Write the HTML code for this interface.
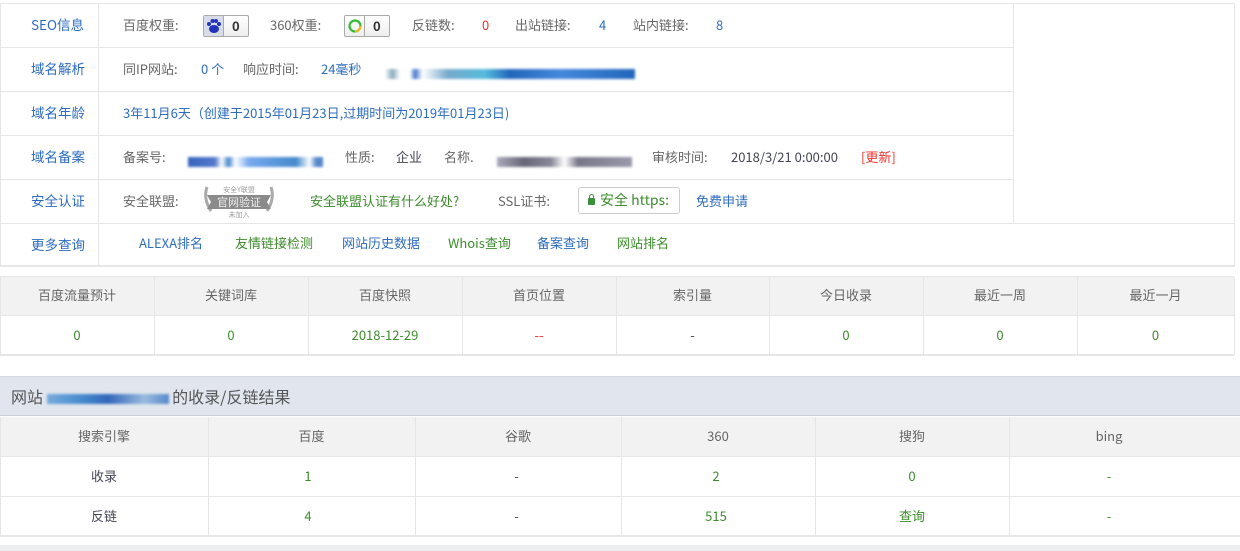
<!DOCTYPE html>
<html><head><meta charset="utf-8"><style>
*{margin:0;padding:0;box-sizing:border-box}
body{width:1240px;height:551px;background:#fff;font-family:"Noto Sans CJK SC","Liberation Sans",sans-serif;font-size:13px;line-height:18px;color:#666;position:relative;overflow:hidden}
.a{position:absolute;white-space:nowrap}
.hl{position:absolute;height:1px;background:#e6e6e6}
.vl{position:absolute;width:1px;background:#e6e6e6}
.b{color:#2d6cc0}.g{color:#3c8c2c}.r{color:#f0302a}.d{color:#445}
.lab{color:#2d6cc0;font-size:13.5px}
.blur{display:inline-block;height:10px;filter:blur(1.3px);vertical-align:middle}
.badge{position:absolute;height:22px;border:1px solid #aaa;border-radius:2px;background:linear-gradient(#fff,#eee);}
.cell{position:absolute;text-align:center}
</style></head><body>
<div class="hl" style="left:0;top:3px;width:1235px"></div>
<div class="hl" style="left:0;top:47px;width:1013px"></div>
<div class="hl" style="left:0;top:91px;width:1013px"></div>
<div class="hl" style="left:0;top:135px;width:1013px"></div>
<div class="hl" style="left:0;top:179px;width:1013px"></div>
<div class="hl" style="left:0;top:223px;width:1235px"></div>
<div class="hl" style="left:0;top:265px;width:1235px;height:2px"></div>
<div class="vl" style="left:0;top:3px;height:263px"></div>
<div class="vl" style="left:98px;top:3px;height:263px"></div>
<div class="vl" style="left:1013px;top:3px;height:220px"></div>
<div class="vl" style="left:1234px;top:3px;height:263px"></div>

<div class="a lab" style="left:31px;top:15px">SEO信息</div>
<div class="a lab" style="left:31px;top:59px">域名解析</div>
<div class="a lab" style="left:31px;top:103px">域名年龄</div>
<div class="a lab" style="left:31px;top:147px">域名备案</div>
<div class="a lab" style="left:31px;top:191px">安全认证</div>
<div class="a lab" style="left:31px;top:235px">更多查询</div>

<div class="a" style="left:123px;top:16px">百度权重:</div>
<div class="badge" style="left:203px;top:15px;width:46px"><div style="position:absolute;left:0;top:0;width:20px;height:20px;background:#d8dce8;border-right:1px solid #aaa"><svg width="20" height="20" viewBox="0 0 20 20"><ellipse cx="10" cy="13" rx="5" ry="4" fill="#2233bb"/><circle cx="5" cy="8" r="2" fill="#2233bb"/><circle cx="8.5" cy="5" r="2" fill="#2233bb"/><circle cx="12" cy="5" r="2" fill="#2233bb"/><circle cx="15" cy="8" r="2" fill="#2233bb"/></svg></div><b class="a" style="left:28px;top:1px;color:#333">0</b></div>
<div class="a" style="left:270px;top:16px">360权重:</div>
<div class="badge" style="left:344px;top:15px;width:46px"><div style="position:absolute;left:0;top:0;width:20px;height:20px;border-right:1px solid #aaa"><svg width="20" height="20"><circle cx="10" cy="10" r="5.5" fill="none" stroke="#3b3" stroke-width="2.2"/><path d="M10 15.5 A5.5 5.5 0 0 0 15.5 10" stroke="#eb2" stroke-width="2.2" fill="none"/></svg></div><b class="a" style="left:28px;top:1px;color:#333">0</b></div>
<div class="a" style="left:412px;top:16px">反链数:</div>
<div class="a r" style="left:482px;top:16px">0</div>
<div class="a" style="left:515px;top:16px">出站链接:</div>
<div class="a b" style="left:599px;top:16px">4</div>
<div class="a" style="left:633px;top:16px">站内链接:</div>
<div class="a b" style="left:716px;top:16px">8</div>

<div class="a" style="left:123px;top:60px">同IP网站:</div>
<div class="a b" style="left:201px;top:60px">0 个</div>
<div class="a" style="left:243px;top:60px">响应时间:</div>
<div class="a b" style="left:321px;top:60px">24毫秒</div>
<div class="a" style="left:385px;top:64px"><span class="blur" style="width:250px;background:linear-gradient(90deg,#fff 0,#8ab 3%,#fff 6%,#fff 10%,#47c 12%,#fff 15%,#7ac 25%,#5bd 40%,#26b 50%,#48d 70%,#26b 100%)"></span></div>

<div class="a b" style="left:123px;top:104px">3年11月6天（创建于2015年01月23日,过期时间为2019年01月23日)</div>

<div class="a" style="left:123px;top:148px">备案号:</div>
<div class="a" style="left:188px;top:152px"><span class="blur" style="width:135px;background:linear-gradient(90deg,#36b 0,#57c 20%,#fff 25%,#48c 30%,#fff 35%,#7ae 45%,#48c 80%,#fff 90%,#58c 95%)"></span></div>
<div class="a" style="left:345px;top:148px">性质:</div>
<div class="a d" style="left:396px;top:148px">企业</div>
<div class="a" style="left:444px;top:148px">名称.</div>
<div class="a" style="left:497px;top:152px"><span class="blur" style="width:135px;background:linear-gradient(90deg,#aab 0,#667 20%,#889 40%,#fff 50%,#778 60%,#99a 100%)"></span></div>
<div class="a" style="left:652px;top:148px">审核时间:</div>
<div class="a d" style="left:731px;top:148px">2018/3/21 0:00:00</div>
<div class="a r" style="left:861px;top:148px">[更新]</div>

<div class="a" style="left:123px;top:192px">安全联盟:</div>
<div class="a" style="left:201px;top:181px;width:76px;height:38px"><svg width="76" height="38"><path d="M6 6 Q2 18 10 30" stroke="#aaa" stroke-width="3" fill="none"/><path d="M70 6 Q74 18 66 30" stroke="#aaa" stroke-width="3" fill="none"/><path d="M6 14 H70 L66 21 L70 28 H6 L10 21 Z" fill="#8a8a8a"/><text x="38" y="25" font-size="11" fill="#eee" text-anchor="middle" font-family="Noto Sans CJK SC">官网验证</text><text x="38" y="11" font-size="7" fill="#999" text-anchor="middle" font-family="Noto Sans CJK SC">安全Y联盟</text><text x="38" y="36" font-size="7" fill="#999" text-anchor="middle" font-family="Noto Sans CJK SC">未加入</text></svg></div>
<div class="a g" style="left:310px;top:192px">安全联盟认证有什么好处?</div>
<div class="a" style="left:498px;top:192px">SSL证书:</div>
<div class="a" style="left:578px;top:187px;width:102px;height:27px;border:1px solid #ccc;border-radius:3px"><span class="a" style="left:9px;top:10px;width:7px;height:7px;background:#3a8f3a;border-radius:1px"></span><span class="a" style="left:10px;top:6px;width:5px;height:5px;border:1.5px solid #3a8f3a;border-bottom:none;border-radius:3px 3px 0 0"></span><span class="a g" style="left:21px;top:3px;font-size:14px">安全 https:</span></div>
<div class="a b" style="left:696px;top:192px">免费申请</div>

<div class="a b" style="left:139px;top:234px">ALEXA排名</div>
<div class="a g" style="left:235px;top:234px">友情链接检测</div>
<div class="a b" style="left:342px;top:234px">网站历史数据</div>
<div class="a g" style="left:448px;top:234px">Whois查询</div>
<div class="a b" style="left:537px;top:234px">备案查询</div>
<div class="a g" style="left:617px;top:234px">网站排名</div>

<div class="a" style="left:0;top:277px;width:1234px;height:38px;background:#f2f2f2"></div>
<div class="hl" style="left:0;top:276px;width:1234px"></div>
<div class="hl" style="left:0;top:315px;width:1234px"></div>
<div class="hl" style="left:0;top:354px;width:1234px;height:2px"></div>
<div class="vl" style="left:0;top:277px;height:78px"></div>
<div class="vl" style="left:154px;top:277px;height:78px"></div>
<div class="vl" style="left:308px;top:277px;height:78px"></div>
<div class="vl" style="left:462px;top:277px;height:78px"></div>
<div class="vl" style="left:616px;top:277px;height:78px"></div>
<div class="vl" style="left:769px;top:277px;height:78px"></div>
<div class="vl" style="left:923px;top:277px;height:78px"></div>
<div class="vl" style="left:1077px;top:277px;height:78px"></div>
<div class="vl" style="left:1234px;top:277px;height:78px"></div>
<div class="cell" style="left:0;top:286px;width:154px">百度流量预计</div>
<div class="cell" style="left:154px;top:286px;width:154px">关键词库</div>
<div class="cell" style="left:308px;top:286px;width:154px">百度快照</div>
<div class="cell" style="left:462px;top:286px;width:154px">首页位置</div>
<div class="cell" style="left:616px;top:286px;width:153px">索引量</div>
<div class="cell" style="left:769px;top:286px;width:154px">今日收录</div>
<div class="cell" style="left:923px;top:286px;width:154px">最近一周</div>
<div class="cell" style="left:1077px;top:286px;width:157px">最近一月</div>
<div class="cell g" style="left:0;top:326px;width:154px">0</div>
<div class="cell g" style="left:154px;top:326px;width:154px">0</div>
<div class="cell g" style="left:308px;top:326px;width:154px">2018-12-29</div>
<div class="cell r" style="left:462px;top:326px;width:154px">--</div>
<div class="cell d" style="left:616px;top:326px;width:153px">-</div>
<div class="cell g" style="left:769px;top:326px;width:154px">0</div>
<div class="cell g" style="left:923px;top:326px;width:154px">0</div>
<div class="cell g" style="left:1077px;top:326px;width:157px">0</div>

<div class="a" style="left:0;top:376px;width:1240px;height:40px;background:#e1e6ee;border-top:1px solid #d6dbe3;border-bottom:1px solid #c8d0dc"></div>
<div class="a" style="left:11px;top:386px;font-size:16px;line-height:20px;color:#555">网站 <span class="blur" style="width:122px;background:linear-gradient(90deg,#7ad,#48c 30%,#36b 50%,#9bd 80%,#58c)"></span> 的收录/反链结果</div>
<div class="a" style="left:0;top:417px;width:1240px;height:39px;background:#f2f2f2"></div>
<div class="hl" style="left:0;top:456px;width:1240px"></div>
<div class="hl" style="left:0;top:496px;width:1240px"></div>
<div class="hl" style="left:0;top:535px;width:1240px;height:2px"></div>
<div class="vl" style="left:0;top:417px;height:119px"></div>
<div class="vl" style="left:208px;top:417px;height:119px"></div>
<div class="vl" style="left:415px;top:417px;height:119px"></div>
<div class="vl" style="left:621px;top:417px;height:119px"></div>
<div class="vl" style="left:815px;top:417px;height:119px"></div>
<div class="vl" style="left:1009px;top:417px;height:119px"></div>
<div class="cell" style="left:0;top:427px;width:208px">搜索引擎</div>
<div class="cell" style="left:208px;top:427px;width:207px">百度</div>
<div class="cell" style="left:415px;top:427px;width:206px">谷歌</div>
<div class="cell" style="left:621px;top:427px;width:194px">360</div>
<div class="cell" style="left:815px;top:427px;width:194px">搜狗</div>
<div class="cell" style="left:1009px;top:427px;width:200px">bing</div>
<div class="cell d" style="left:0;top:467px;width:208px">收录</div>
<div class="cell g" style="left:208px;top:467px;width:200px">1</div>
<div class="cell d" style="left:415px;top:467px;width:203px">-</div>
<div class="cell g" style="left:621px;top:467px;width:190px">2</div>
<div class="cell g" style="left:815px;top:467px;width:194px">0</div>
<div class="cell g" style="left:1009px;top:467px;width:200px">-</div>
<div class="cell d" style="left:0;top:507px;width:208px">反链</div>
<div class="cell g" style="left:208px;top:507px;width:200px">4</div>
<div class="cell d" style="left:415px;top:507px;width:203px">-</div>
<div class="cell g" style="left:621px;top:507px;width:190px">515</div>
<div class="cell g" style="left:815px;top:507px;width:194px">查询</div>
<div class="cell g" style="left:1009px;top:507px;width:200px">-</div>
<div class="a" style="left:0;top:545px;width:1240px;height:6px;background:#eceef0"></div>
</body></html>
